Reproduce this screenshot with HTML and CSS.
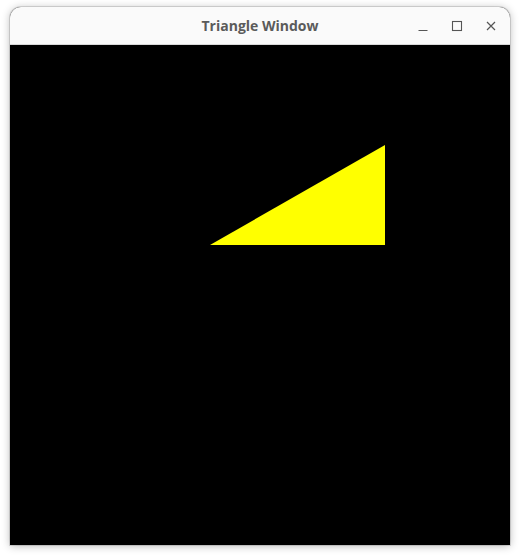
FILE: index.html
```html
<!DOCTYPE html>
<html>
<head>
<meta charset="utf-8">
<link rel="stylesheet" href="styles.css">
</head>
<body>
<div class="window">
  <div class="titlebar">
    <span class="title">Triangle Window</span>
    <div class="controls">
      <svg class="btn" width="12" height="12" viewBox="0 0 12 12"><path d="M1.5 10.5 H10.5" stroke="#555" stroke-width="1.2"/></svg>
      <svg class="btn" width="12" height="12" viewBox="0 0 12 12"><rect x="1.5" y="1.5" width="9" height="9" fill="none" stroke="#555" stroke-width="1.1"/></svg>
      <svg class="btn" width="12" height="12" viewBox="0 0 12 12"><path d="M2 2 L10 10 M10 2 L2 10" stroke="#555" stroke-width="1.2"/></svg>
    </div>
  </div>
  <svg class="canvas" width="500" height="500" viewBox="0 0 500 500">
    <rect width="500" height="500" fill="#000"/>
    <polygon points="200,200 375,200 375,100" fill="#ffff00"/>
  </svg>
</div>
</body>
</html>
```
FILE: styles.css
```css
html, body {
  margin: 0;
  padding: 0;
  background: #ffffff;
}
body {
  width: 520px;
  height: 555px;
  overflow: hidden;
}
.window {
  margin: 7px 10px 0 10px;
  width: 500px;
  border-radius: 11px 11px 0 0;
  overflow: hidden;
  box-shadow: 0 1px 8px rgba(0,0,0,0.28), 0 0 0 1px rgba(0,0,0,0.12);
  background: #000;
}
.titlebar {
  height: 37px;
  background: #fafafa;
  border-bottom: 1px solid #d8d8d8;
  display: flex;
  align-items: center;
  justify-content: center;
  position: relative;
}
.title {
  font-family: "Open Sans", "Noto Sans", sans-serif;
  font-weight: 700;
  font-size: 14px;
  color: #5b5b5b;
  margin-top: -1px;
}
.controls {
  position: absolute;
  right: 13px;
  top: 13px;
  display: flex;
  gap: 22px;
}
.btn {
  display: block;
}
.canvas {
  display: block;
}
```
